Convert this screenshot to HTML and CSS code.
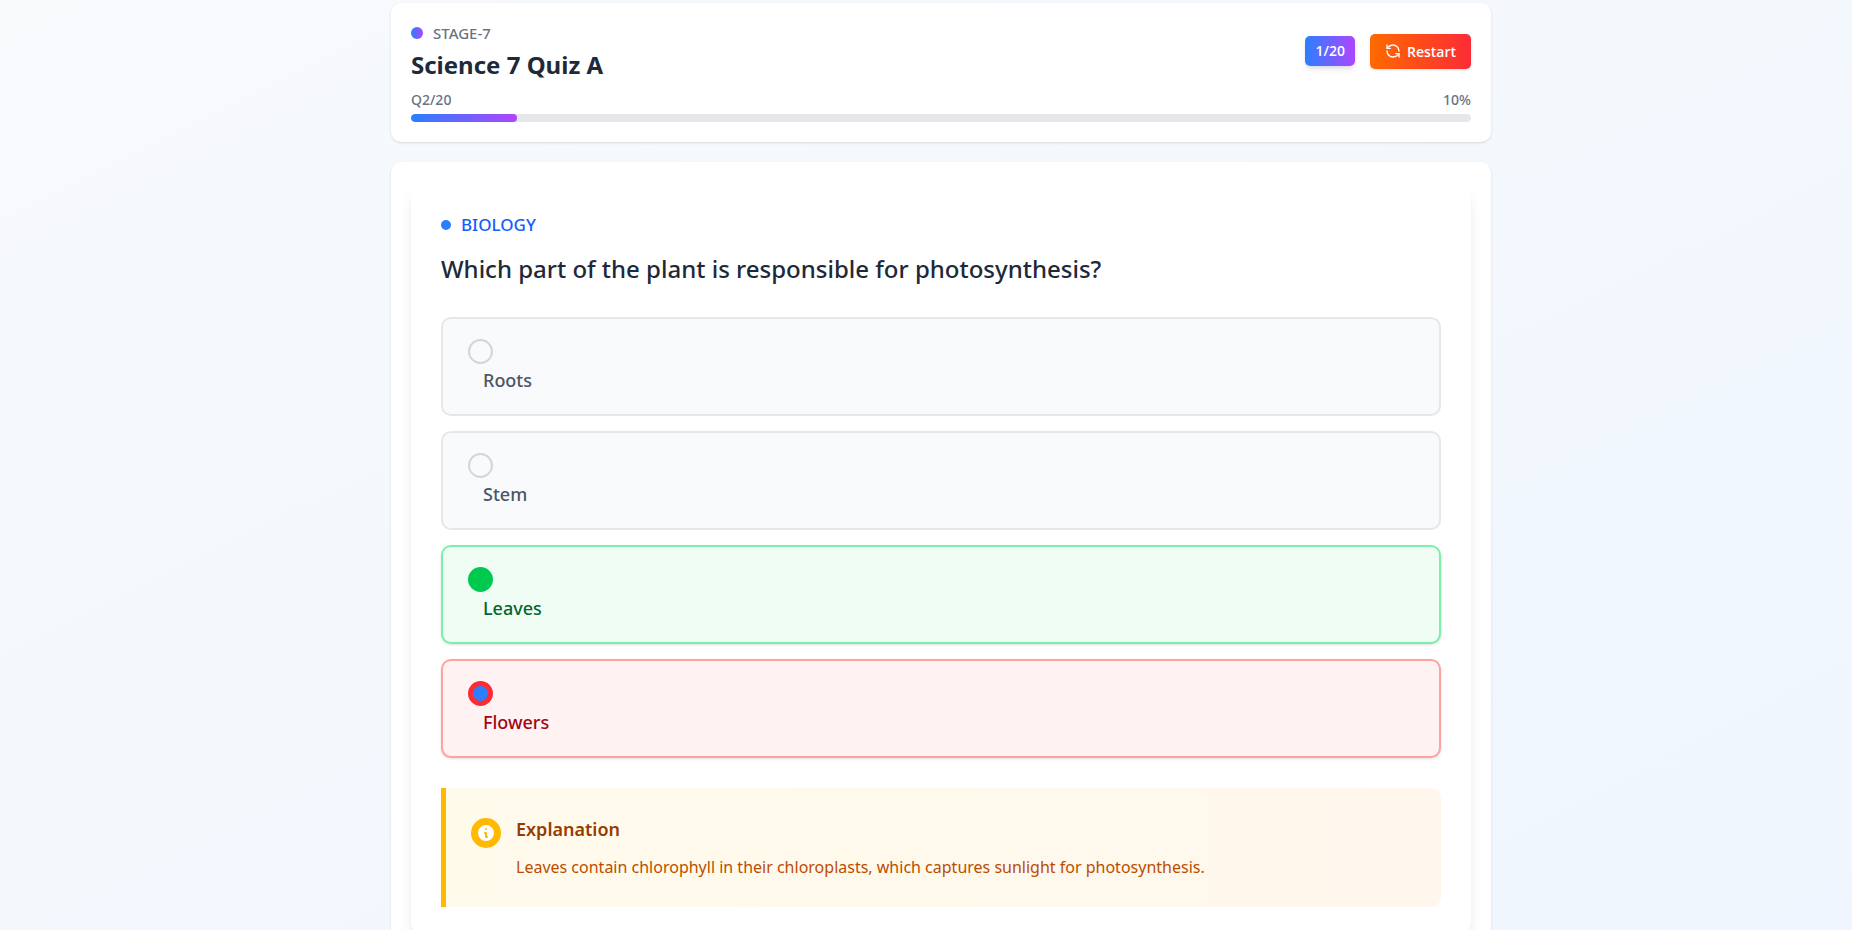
FILE: index.html
```
<!DOCTYPE html>
<html lang="en">
<head>
<meta charset="utf-8">
<meta name="viewport" content="width=device-width, initial-scale=1">
<title>Science 7 Quiz A</title>
<link rel="stylesheet" href="styles.css">
</head>
<body>
<div class="page">
  <header class="card quiz-header">
    <div class="header-row">
      <div>
        <div class="stage"><span class="stage-dot"></span>STAGE-7</div>
        <h1 class="title">Science 7 Quiz A</h1>
      </div>
      <div class="actions">
        <span class="score">1/20</span>
        <button class="restart" type="button">
          <svg class="restart-icon" viewBox="0 0 24 24" fill="none" stroke="currentColor" stroke-width="2" stroke-linecap="round" stroke-linejoin="round" aria-hidden="true"><path d="M21 12a9 9 0 0 0-9-9 9.750 9.750 0 0 0-6.740 2.740L3 8"/><path d="M3 3v5h5"/><path d="M3 12a9 9 0 0 0 9 9 9.750 9.750 0 0 0 6.740-2.740L21 16"/><path d="M16 16h5v5"/></svg>
          Restart
        </button>
      </div>
    </div>
    <div class="progress-labels"><span>Q2/20</span><span>10%</span></div>
    <div class="progress"><div class="progress-fill" style="width: 10%"></div></div>
  </header>

  <main class="card quiz-body">
    <section class="question-card">
      <div class="subject"><span class="subject-dot"></span>BIOLOGY</div>
      <h2 class="question" id="question">Which part of the plant is responsible for photosynthesis?</h2>
      <div class="options" role="radiogroup" aria-labelledby="question">
        <label class="option"><input class="radio" type="radio" name="answer"><span class="option-text">Roots</span></label>
        <label class="option"><input class="radio" type="radio" name="answer"><span class="option-text">Stem</span></label>
        <label class="option option-correct"><input class="radio" type="radio" name="answer"><span class="option-text">Leaves</span></label>
        <label class="option option-wrong"><input class="radio" type="radio" name="answer" checked><span class="option-text">Flowers</span></label>
      </div>
      <aside class="explanation">
        <span class="info-badge">
          <svg class="info-icon" viewBox="0 0 20 20" fill="currentColor" aria-hidden="true"><path fill-rule="evenodd" d="M18 10a8 8 0 1 1-16 0 8 8 0 0 1 16 0Zm-7-4a1 1 0 1 1-2 0 1 1 0 0 1 2 0ZM9 9a1 1 0 0 0 0 2v3a1 1 0 0 0 1 1h1a1 1 0 1 0 0-2v-3a1 1 0 0 0-1-1H9Z" clip-rule="evenodd"/></svg>
        </span>
        <div>
          <h3 class="explanation-title">Explanation</h3>
          <p class="explanation-text">Leaves contain chlorophyll in their chloroplasts, which captures sunlight for photosynthesis.</p>
        </div>
      </aside>
    </section>
  </main>
</div>
</body>
</html>
```
FILE: styles.css
```
*, *::before, *::after {
  box-sizing: border-box;
}

body {
  margin: 0;
  min-height: 100vh;
  overflow: hidden;
  font-family: "Noto Sans", "Open Sans", sans-serif;
  color: #1e2939;
  background: linear-gradient(to bottom right, #f8fafc, #eff6ff) fixed;
}

h1, h2, h3, p {
  margin: 0;
}

.page {
  max-width: 1130px;
  margin: 0 auto;
  padding: 3px 0 20px 30px;
  height: 100vh;
}

.card {
  background: #fff;
  border-radius: 10px;
  padding: 20px;
  box-shadow: 0 1px 3px rgba(0, 0, 0, 0.1), 0 1px 2px -1px rgba(0, 0, 0, 0.1);
}

.quiz-header {
  margin-bottom: 20px;
}

.header-row {
  display: flex;
  justify-content: space-between;
  align-items: center;
  margin-bottom: 11px;
}

.stage {
  display: flex;
  align-items: center;
  gap: 10px;
  margin-bottom: 8px;
  font-size: 15px;
  line-height: 20px;
  font-weight: 500;
  color: #6a7282;
}

.stage-dot {
  width: 12px;
  height: 12px;
  border-radius: 50%;
  background: linear-gradient(to right, #2b7fff, #ad46ff);
}

.title {
  font-size: 24px;
  line-height: 28px;
  font-weight: 700;
}

.actions {
  display: flex;
  align-items: center;
  gap: 15px;
  font-family: "Open Sans", "Noto Sans", sans-serif;
}

.score {
  padding: 5px 10px;
  border-radius: 5px;
  font-size: 14px;
  line-height: 20px;
  font-weight: 600;
  color: #fff;
  background: linear-gradient(to right, #2b7fff, #ad46ff);
  box-shadow: 0 4px 6px -1px rgba(0, 0, 0, 0.1), 0 2px 4px -2px rgba(0, 0, 0, 0.1);
}

.restart {
  display: flex;
  align-items: center;
  gap: 6px;
  padding: 7px 15px;
  border: 0;
  border-radius: 5px;
  font-family: inherit;
  font-size: 14px;
  line-height: 21px;
  font-weight: 600;
  color: #fff;
  background: linear-gradient(to right, #ff6900, #fb2c36);
  box-shadow: 0 1px 3px rgba(0, 0, 0, 0.1), 0 1px 2px -1px rgba(0, 0, 0, 0.1);
}

.restart-icon {
  width: 16px;
  height: 16px;
}

.progress-labels {
  display: flex;
  justify-content: space-between;
  margin-bottom: 4px;
  font-size: 14px;
  line-height: 20px;
  font-weight: 500;
  color: #6a7282;
}

.progress {
  height: 8px;
  border-radius: 4px;
  overflow: hidden;
  background: #e5e7eb;
}

.progress-fill {
  height: 100%;
  border-radius: 4px;
  background: linear-gradient(to right, #2b7fff, #ad46ff);
}

.question-card {
  padding: 30px;
  border-radius: 15px;
  background: #fff;
  box-shadow: 0 10px 15px -3px rgba(0, 0, 0, 0.1), 0 4px 6px -4px rgba(0, 0, 0, 0.1);
}

.subject {
  display: flex;
  align-items: center;
  gap: 10px;
  margin-bottom: 11px;
  font-size: 17px;
  line-height: 26px;
  font-weight: 500;
  color: #155dfc;
}

.subject-dot {
  width: 10px;
  height: 10px;
  border-radius: 50%;
  background: #2b7fff;
}

.question {
  margin-bottom: 28px;
  font-size: 24px;
  line-height: 40px;
  font-weight: 500;
}

.options {
  display: grid;
  gap: 15px;
}

.option {
  display: grid;
  padding: 20px 25px 18px;
  border: 2px solid #e5e7eb;
  border-radius: 10px;
  background: #f9fafb;
  color: #4a5565;
}

.option-correct {
  border-color: #7bf1a8;
  background: #f0fdf4;
  color: #016630;
  box-shadow: 0 1px 3px rgba(0, 0, 0, 0.1), 0 1px 2px -1px rgba(0, 0, 0, 0.1);
}

.option-wrong {
  border-color: #ffa2a2;
  background: #fef2f2;
  color: #9f0712;
  box-shadow: 0 1px 3px rgba(0, 0, 0, 0.1), 0 1px 2px -1px rgba(0, 0, 0, 0.1);
}

.radio {
  appearance: none;
  display: grid;
  place-items: center;
  width: 25px;
  height: 25px;
  margin: 0;
  border: 2px solid #d1d5dc;
  border-radius: 50%;
}

.radio:checked::before {
  content: "";
  width: 15px;
  height: 15px;
  border-radius: 50%;
  background: #2b7fff;
}

.option-correct .radio {
  border-color: #00c950;
  background: #00c950;
}

.option-wrong .radio {
  border-color: #fb2c36;
  background: #fb2c36;
}

.option-text {
  margin-left: 15px;
  font-size: 18px;
  line-height: 32px;
  font-weight: 500;
}

.explanation {
  display: flex;
  gap: 15px;
  margin-top: 30px;
  padding: 25px;
  border-left: 5px solid #ffb900;
  border-radius: 0 10px 10px 0;
  background: linear-gradient(to right, #fffbeb, #fff7ed);
}

.info-badge {
  display: grid;
  place-items: center;
  flex: none;
  width: 30px;
  height: 30px;
  margin-top: 5px;
  border-radius: 50%;
  color: #fff;
  background: #ffb900;
}

.info-icon {
  width: 20px;
  height: 20px;
}

.explanation-title {
  margin-bottom: 8px;
  font-size: 18px;
  line-height: 32px;
  font-weight: 600;
  color: #973c00;
}

.explanation-text {
  font-size: 16px;
  line-height: 29px;
  color: #bb4d00;
}
```
